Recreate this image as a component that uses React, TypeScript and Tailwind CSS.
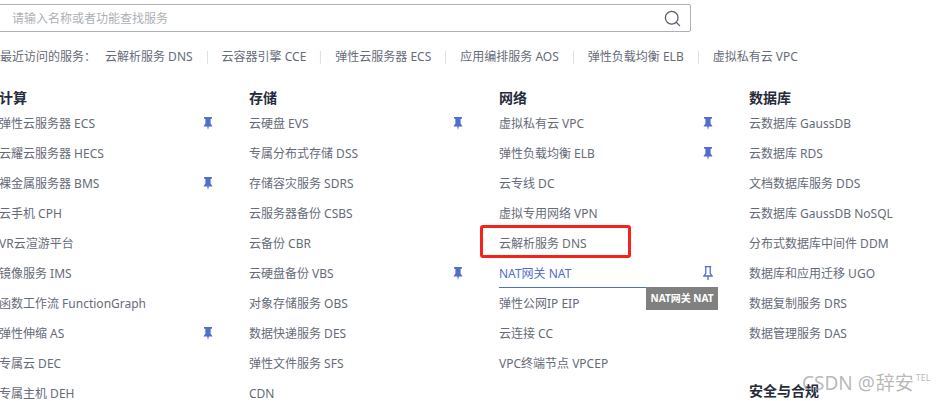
import { Search } from "lucide-react";

type Item = { name: string; pin?: boolean; active?: boolean };

const recent = [
  "云解析服务 DNS",
  "云容器引擎 CCE",
  "弹性云服务器 ECS",
  "应用编排服务 AOS",
  "弹性负载均衡 ELB",
  "虚拟私有云 VPC",
];

const compute: Item[] = [
  { name: "弹性云服务器 ECS", pin: true },
  { name: "云耀云服务器 HECS" },
  { name: "裸金属服务器 BMS", pin: true },
  { name: "云手机 CPH" },
  { name: "VR云渲游平台" },
  { name: "镜像服务 IMS" },
  { name: "函数工作流 FunctionGraph" },
  { name: "弹性伸缩 AS", pin: true },
  { name: "专属云 DEC" },
  { name: "专属主机 DEH" },
];

const storage: Item[] = [
  { name: "云硬盘 EVS", pin: true },
  { name: "专属分布式存储 DSS" },
  { name: "存储容灾服务 SDRS" },
  { name: "云服务器备份 CSBS" },
  { name: "云备份 CBR" },
  { name: "云硬盘备份 VBS", pin: true },
  { name: "对象存储服务 OBS" },
  { name: "数据快递服务 DES" },
  { name: "弹性文件服务 SFS" },
  { name: "CDN" },
];

const network: Item[] = [
  { name: "虚拟私有云 VPC", pin: true },
  { name: "弹性负载均衡 ELB", pin: true },
  { name: "云专线 DC" },
  { name: "虚拟专用网络 VPN" },
  { name: "云解析服务 DNS" },
  { name: "NAT网关 NAT", active: true },
  { name: "弹性公网IP EIP" },
  { name: "云连接 CC" },
  { name: "VPC终端节点 VPCEP" },
];

const database: Item[] = [
  { name: "云数据库 GaussDB" },
  { name: "云数据库 RDS" },
  { name: "文档数据库服务 DDS" },
  { name: "云数据库 GaussDB NoSQL" },
  { name: "分布式数据库中间件 DDM" },
  { name: "数据库和应用迁移 UGO" },
  { name: "数据复制服务 DRS" },
  { name: "数据管理服务 DAS" },
];

function Pin({ outline }: { outline?: boolean }) {
  if (outline) {
    return (
      <svg className="mt-[-3px]" width="10" height="14" viewBox="0 0 10 14" fill="none" stroke="#526ecc" strokeWidth="1.3">
        <path d="M1.8 .7h6.4M2.8 .7v6.6L1 10h8L7.2 7.3V.7M5 10v4" />
      </svg>
    );
  }
  return (
    <svg className="mt-[-1px]" width="10" height="13" viewBox="0 0 10 13" fill="#526ecc">
      <path d="M1 0h8v1.4L7.6 2v4.6L9.6 9.4H5.8L5 13l-.8-3.6H.4l2-2.8V2L1 1.4z" />
    </svg>
  );
}

function Row({ item }: { item: Item }) {
  return (
    <li
      className={`relative flex h-[30px] items-center justify-between pr-[36px] text-xs ${
        item.active ? "text-[#526ecc]" : "text-[#666b78]"
      }`}
    >
      <span>{item.name}</span>
      {item.pin && <Pin />}
      {item.active && <Pin outline />}
      {item.active && (
        <>
          <span className="absolute bottom-px left-0 right-[31px] h-px bg-[#526ecc]" />
          <span className="absolute right-[31px] top-[28px] z-10 flex h-[23px] w-[72px] items-center justify-center bg-[#808080] text-[10px] font-bold whitespace-nowrap text-white">
            {item.name}
          </span>
        </>
      )}
    </li>
  );
}

function Column({ title, items, extra }: { title: string; items: Item[]; extra?: string }) {
  return (
    <div className="w-[250px] shrink-0">
      <h3 className="flex h-[23px] items-center text-sm font-bold text-[#252b3a]">{title}</h3>
      <ul>
        {items.map((item) => (
          <Row key={item.name} item={item} />
        ))}
      </ul>
      {extra && <h3 className="mt-[30px] flex h-[24px] items-center text-sm font-bold text-[#252b3a]">{extra}</h3>}
    </div>
  );
}

export default function App() {
  return (
    <div
      className="relative h-[401px] w-[948px] overflow-hidden bg-white"
      style={{ fontFamily: '"Noto Sans", "Noto Sans CJK SC", sans-serif' }}
    >
      {/* search box, left edge is cut off by the screenshot */}
      <div className="mt-[4px] ml-[-4px] flex h-[28px] w-[695px] items-center justify-between rounded-[2px] border border-[#adb0b8] pr-[8px] pl-[15px]">
        <span className="pt-px text-xs text-[#adb0b8]">请输入名称或者功能查找服务</span>
        <Search size={19} strokeWidth={1.6} className="text-[#575d6c]" />
      </div>

      <div className="mt-[15px] flex h-[20px] items-center text-xs text-[#666b78]">
        <span className="w-[105px] shrink-0">最近访问的服务：</span>
        {recent.map((name, i) => (
          <div key={name} className="flex items-center">
            {i > 0 && <span className="mx-[14px] h-[13px] w-px bg-[#dfe1e6]" />}
            <span>{name}</span>
          </div>
        ))}
      </div>

      <div className="mt-[19px] ml-[-1px] flex">
        <Column title="计算" items={compute} />
        <Column title="存储" items={storage} />
        <Column title="网络" items={network} />
        <Column title="数据库" items={database} extra="安全与合规" />
      </div>

      {/* red annotation drawn over the list */}
      <div className="absolute top-[225px] left-[480px] h-[33px] w-[151px] rounded-[3px] border-[3px] border-[#f5231b]" />

      {/* watermark */}
      <div className="absolute top-[370px] left-[802px] flex items-start text-[19px] leading-[26px] whitespace-nowrap text-[#9a9a9a]/70">
        <span>CSDN</span>
        <span className="ml-[5px]">@</span>
        <span className="ml-px">辞安</span>
        <span className="mt-[1px] ml-[2px] text-[9px] leading-[14px]">TEL</span>
      </div>
    </div>
  );
}
